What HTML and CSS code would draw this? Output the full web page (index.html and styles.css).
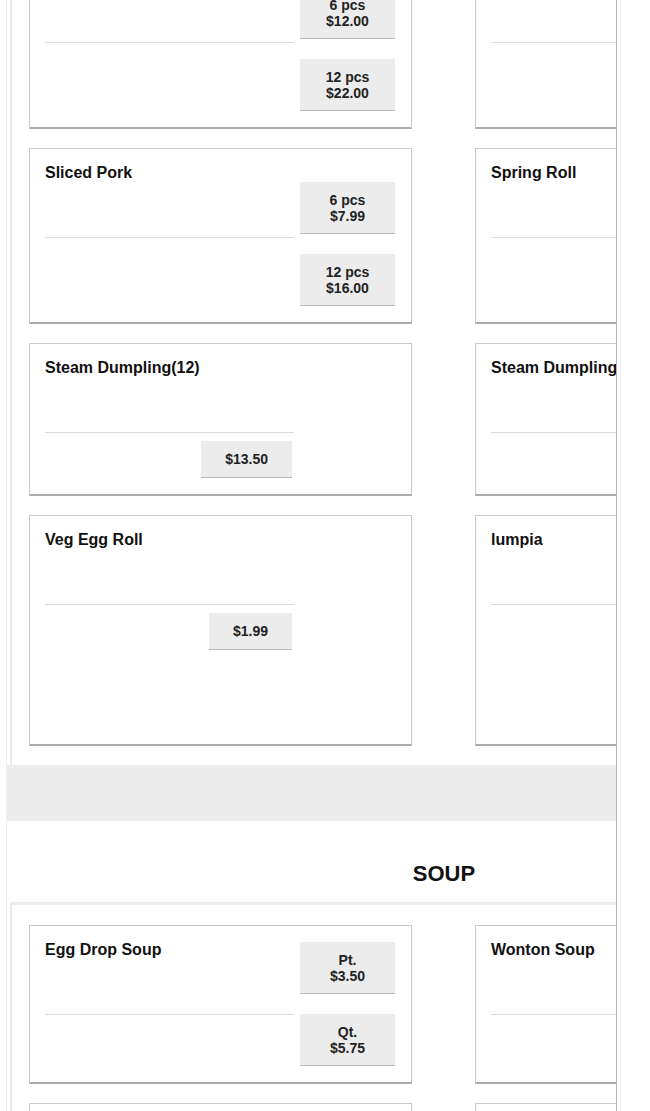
FILE: index.html
```html
<!DOCTYPE html>
<html lang="en">
<head>
<meta charset="utf-8">
<title>Menu</title>
<link rel="stylesheet" href="styles.css">
</head>
<body>
<div class="frame">
  <div class="page">
    <div class="inner">
      <section class="items">
        <div class="grid">
          <div class="card">
            <div class="main"><div class="head"><h3 class="name">Pork Dumpling</h3></div></div>
            <div class="opts opts--low">
              <button class="opt">6 pcs<br>$12.00</button>
              <button class="opt">12 pcs<br>$22.00</button>
            </div>
          </div>
          <div class="card">
            <div class="main"><div class="head"><h3 class="name">Fried Wonton</h3></div></div>
            <div class="opts opts--low">
              <button class="opt">6 pcs<br>$6.99</button>
              <button class="opt">12 pcs<br>$12.99</button>
            </div>
          </div>

          <div class="card">
            <div class="main"><div class="head"><h3 class="name">Sliced Pork</h3></div></div>
            <div class="opts opts--low">
              <button class="opt">6 pcs<br>$7.99</button>
              <button class="opt">12 pcs<br>$16.00</button>
            </div>
          </div>
          <div class="card">
            <div class="main"><div class="head"><h3 class="name">Spring Roll</h3></div></div>
            <div class="opts opts--low">
              <button class="opt">2 pcs<br>$3.50</button>
              <button class="opt">4 pcs<br>$6.50</button>
            </div>
          </div>

          <div class="card">
            <div class="main">
              <div class="head"><h3 class="name">Steam Dumpling(12)</h3></div>
              <div class="single"><button class="price">$13.50</button></div>
            </div>
          </div>
          <div class="card">
            <div class="main">
              <div class="head"><h3 class="name">Steam Dumpling(6)</h3></div>
              <div class="single"><button class="price">$7.50</button></div>
            </div>
          </div>

          <div class="card">
            <div class="main">
              <div class="head"><h3 class="name">Veg Egg Roll</h3></div>
              <div class="single"><button class="price">$1.99</button></div>
            </div>
          </div>
          <div class="card">
            <div class="main"><div class="head"><h3 class="name">lumpia</h3></div></div>
            <div class="opts">
              <button class="opt">6 pcs<br>$5.99</button>
              <button class="opt">12 pcs<br>$10.99</button>
              <button class="opt">24 pcs<br>$19.99</button>
            </div>
          </div>
        </div>
      </section>

      <div class="band"></div>

      <h2 class="section-title">SOUP</h2>

      <section class="items">
        <div class="grid">
          <div class="card">
            <div class="main"><div class="head"><h3 class="name">Egg Drop Soup</h3></div></div>
            <div class="opts">
              <button class="opt">Pt.<br>$3.50</button>
              <button class="opt">Qt.<br>$5.75</button>
            </div>
          </div>
          <div class="card">
            <div class="main"><div class="head"><h3 class="name">Wonton Soup</h3></div></div>
            <div class="opts">
              <button class="opt">Pt.<br>$4.50</button>
              <button class="opt">Qt.<br>$6.75</button>
            </div>
          </div>

          <div class="card">
            <div class="main"><div class="head"><h3 class="name">Hot &amp; Sour Soup</h3></div></div>
            <div class="opts">
              <button class="opt">Pt.<br>$3.75</button>
              <button class="opt">Qt.<br>$5.95</button>
            </div>
          </div>
          <div class="card">
            <div class="main"><div class="head"><h3 class="name">Chicken Noodle Soup</h3></div></div>
            <div class="opts">
              <button class="opt">Pt.<br>$3.75</button>
              <button class="opt">Qt.<br>$5.95</button>
            </div>
          </div>
        </div>
      </section>
    </div>
  </div>
</div>
</body>
</html>
```

FILE: styles.css
```css
html {
  overflow: hidden;
}

body {
  margin: 0;
  background: #fff;
  color: #111;
  font-family: "Liberation Sans", Arial, sans-serif;
}

.frame {
  margin-left: 6px;
  width: 615px;
  box-sizing: border-box;
  border-right: 1px solid #f1f1f1;
  padding-right: 3px;
}

.page {
  width: 611px;
  box-sizing: border-box;
  margin-top: -70px;
  border-left: 1px solid #efefef;
  border-right: 1px solid #b4b4b4;
  overflow: hidden;
}

.inner {
  width: 874px;
}

.items {
  margin-left: 3px;
  border-left: 2px solid #e9e9e9;
  border-top: 3px solid #ececec;
  padding: 20px 0 19px 17px;
}

.grid {
  display: grid;
  grid-template-columns: 383px 383px;
  column-gap: 63px;
  row-gap: 19px;
}

.card {
  display: flex;
  gap: 6px;
  padding: 15px 15px 16px;
  background: #fff;
  border: 1px solid #cacaca;
  border-bottom: 2px solid #acacac;
}

.main {
  width: 249px;
  flex: none;
}

.head {
  height: 73px;
  border-bottom: 1px solid #dcdcdc;
}

.name {
  margin: 0;
  padding-top: 1px;
  font-size: 16px;
  line-height: 16px;
  font-weight: bold;
  white-space: nowrap;
}

.opts {
  width: 95px;
  flex: none;
  display: flex;
  flex-direction: column;
  gap: 20px;
  padding-top: 1px;
}

.opts--low {
  padding-top: 18px;
}

.opt,
.price {
  font-family: inherit;
  font-size: 14px;
  line-height: 16px;
  font-weight: bold;
  color: #222;
  background: #ececec;
  border: 0;
  border-bottom: 1px solid #b9b9b9;
  margin: 0;
  text-align: center;
}

.opt {
  height: 52px;
  width: 95px;
  padding: 0;
}

.single {
  display: flex;
  justify-content: flex-end;
  margin-top: 8px;
  padding-right: 2px;
}

.price {
  height: 37px;
  padding: 0 24px;
}

.band {
  height: 56px;
  background: #ececec;
}

.section-title {
  margin: 0;
  padding: 40px 0 15px;
  font-size: 22px;
  line-height: 26px;
  font-weight: bold;
  text-align: center;
  color: #111;
}
```
